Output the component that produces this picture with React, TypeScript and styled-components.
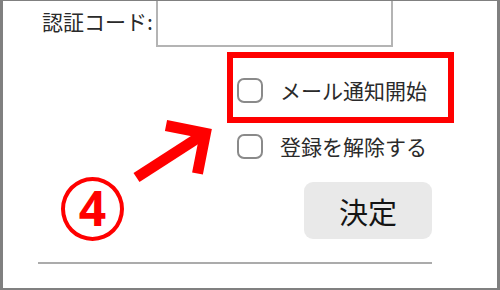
import React from "react";
import styled, { createGlobalStyle } from "styled-components";

const GlobalStyle = createGlobalStyle`
  html, body {
    margin: 0;
    padding: 0;
    background: #fff;
  }
  body {
    font-family: "Noto Sans CJK JP", "Noto Sans", sans-serif;
  }
`;

const Frame = styled.div`
  position: relative;
  width: 500px;
  height: 290px;
  box-sizing: border-box;
  border-style: solid;
  border-color: #808080;
  border-width: 1px 3px 2px 3px;
  overflow: hidden;
  background: #fff;
`;

const Content = styled.div`
  display: flex;
  flex-direction: column;
  padding: 0 65px 0 35px;
`;

const CodeRow = styled.div`
  display: flex;
  align-items: flex-start;
  height: 46px;
  padding-left: 4px;
`;

const CodeLabel = styled.label`
  height: 40px;
  line-height: 40px;
  font-size: 21px;
  color: #2a2a2a;
  white-space: nowrap;
  margin-right: 3px;
`;

const CodeInput = styled.input`
  box-sizing: border-box;
  width: 237px;
  height: 56px;
  margin-top: -10px;
  border: 2px solid #b4b4b4;
  background: #fff;
  outline: none;
`;

const Options = styled.div`
  display: flex;
  flex-direction: column;
  align-items: flex-start;
  margin: 5px 0 0 199px;
`;

const Highlight = styled.div`
  box-sizing: border-box;
  width: 227px;
  margin-left: -10px;
  padding: 19px 0 14px 4px;
  border: 6px solid #ff0000;
`;

const Option = styled.label<{ $gap?: number }>`
  display: flex;
  align-items: center;
  gap: 17px;
  height: 26px;
  margin-top: ${(p) => p.$gap ?? 0}px;
  font-size: 21px;
  color: #2a2a2a;
  white-space: nowrap;
  cursor: pointer;
`;

const Check = styled.input`
  appearance: none;
  box-sizing: border-box;
  width: 26px;
  height: 25px;
  margin: 0;
  border: 2px solid #8a8a8a;
  border-radius: 7px;
  background: #fff;

  &:checked {
    background: #8a8a8a;
  }
`;

const ButtonRow = styled.div`
  display: flex;
  justify-content: flex-end;
  margin-top: 23px;
`;

const SubmitButton = styled.button`
  width: 128px;
  height: 57px;
  border: none;
  border-radius: 9px;
  background: #e9e9e9;
  color: #141414;
  font-family: "Noto Sans CJK JP", "Noto Sans", sans-serif;
  font-size: 29px;
  padding: 0;
  cursor: pointer;
`;

const Divider = styled.hr`
  margin: 23px 0 0 0;
  height: 2px;
  border: none;
  background: #ababab;
`;

/* annotation overlay: page coordinates */
const Overlay = styled.svg`
  position: absolute;
  left: -3px;
  top: -1px;
  width: 500px;
  height: 290px;
  pointer-events: none;
`;

const StepBadge = styled.div`
  position: absolute;
  left: 58px;
  top: 176px;
  width: 63px;
  height: 64px;
  box-sizing: border-box;
  border: 4px solid #ff0000;
  border-radius: 50%;
  display: flex;
  align-items: center;
  justify-content: center;
  color: #ff0000;
  font-family: "Noto Sans", "DejaVu Sans", sans-serif;
  font-weight: 700;
  font-size: 48px;
  line-height: 1;
  padding-bottom: 2px;
`;

export default function App() {
  return (
    <>
      <GlobalStyle />
      <Frame>
        <Content>
          <CodeRow>
            <CodeLabel htmlFor="code">認証コード:</CodeLabel>
            <CodeInput id="code" type="text" />
          </CodeRow>

          <Options>
            <Highlight>
              <Option>
                <Check type="checkbox" />
                メール通知開始
              </Option>
            </Highlight>
            <Option $gap={10}>
              <Check type="checkbox" />
              登録を解除する
            </Option>
          </Options>

          <ButtonRow>
            <SubmitButton type="button">決定</SubmitButton>
          </ButtonRow>

          <Divider />
        </Content>

        <Overlay viewBox="0 0 500 290">
          <line x1="136.5" y1="177.5" x2="204" y2="134" stroke="#ff0000" strokeWidth="11" />
          <polyline
            points="166,125.5 205.4,133.4 197.5,173.5"
            fill="none"
            stroke="#ff0000"
            strokeWidth="11"
            strokeLinejoin="miter"
          />
        </Overlay>
        <StepBadge>4</StepBadge>
      </Frame>
    </>
  );
}
